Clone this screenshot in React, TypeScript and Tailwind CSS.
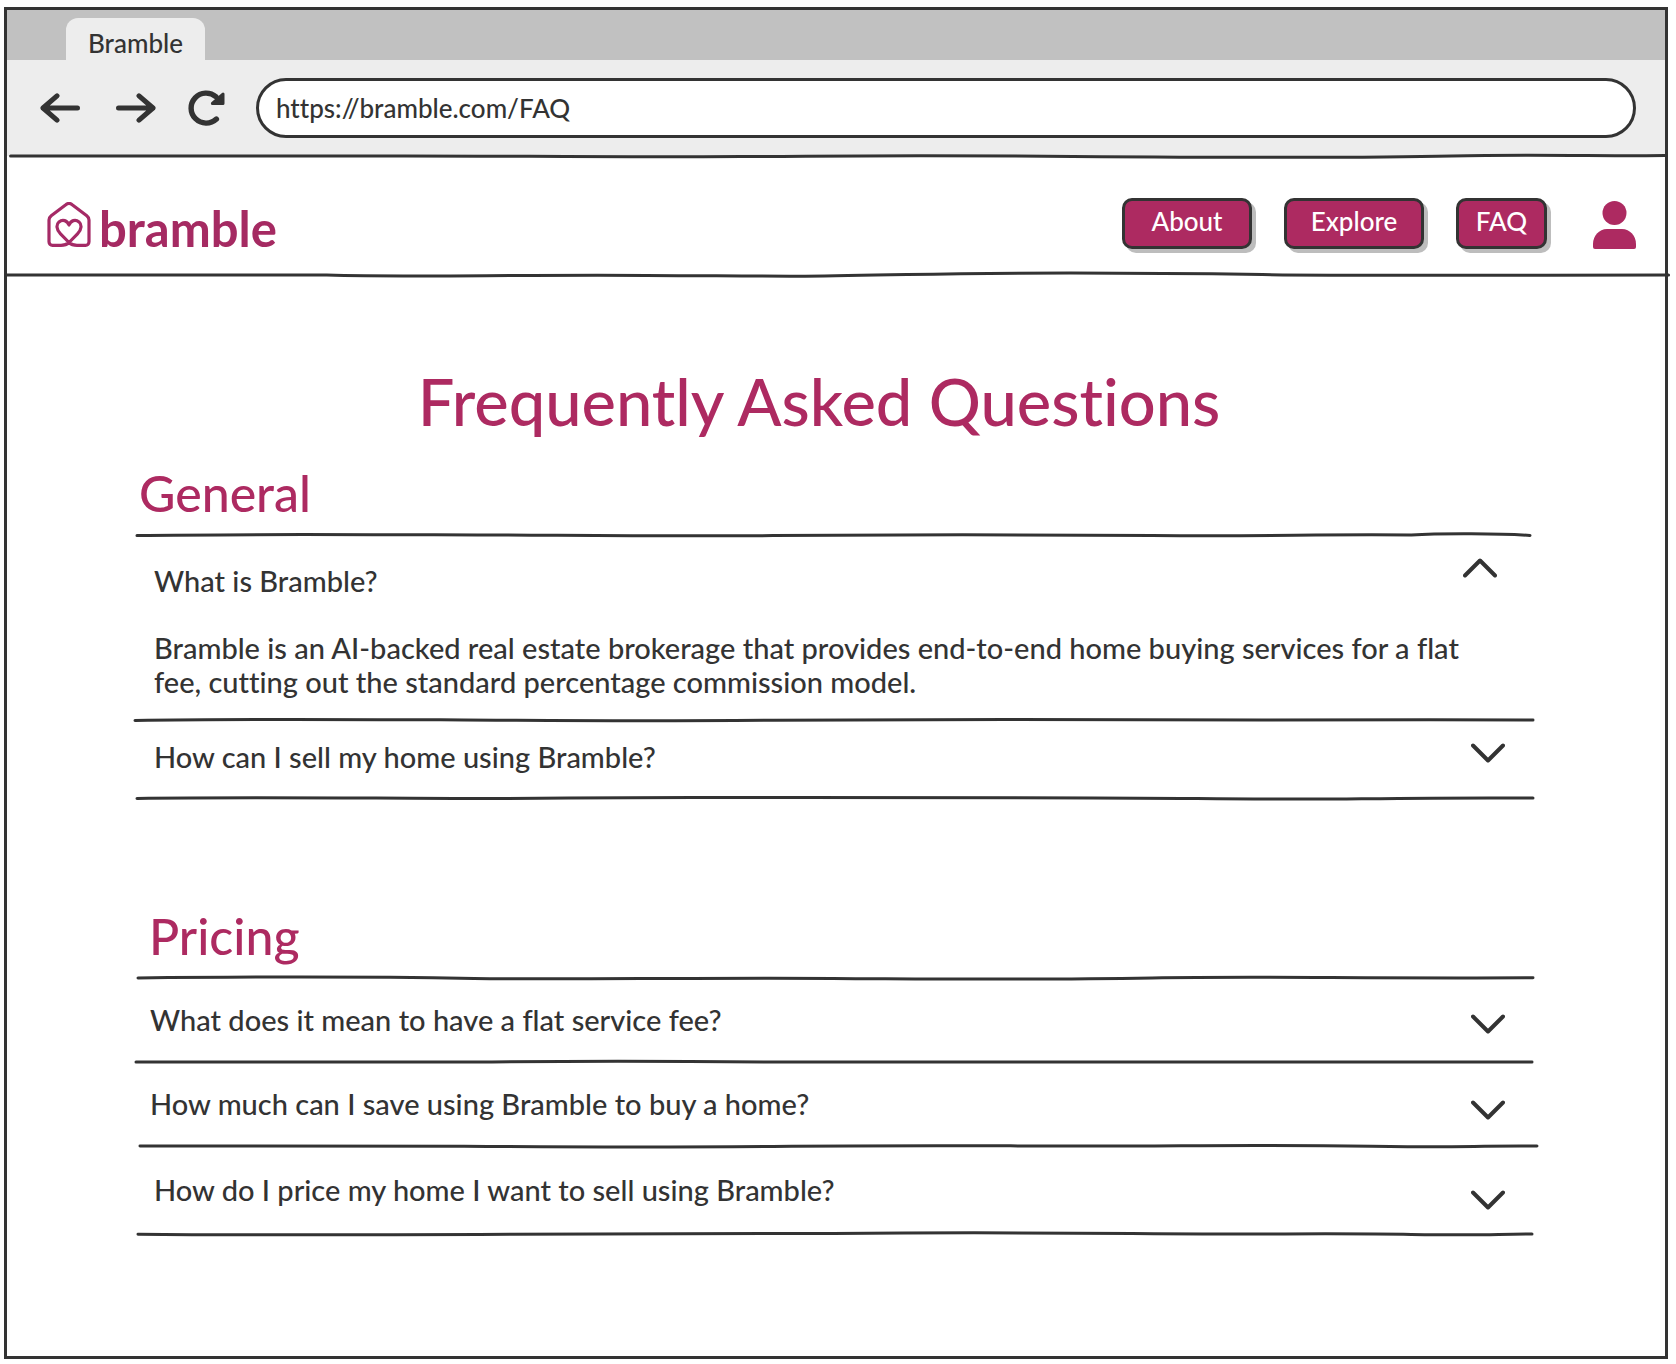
import { useState } from "react";

/* ---------- hand-drawn rules ---------- */

const STROKES = {
  a: "M2 3.6C90 2 180 2.6 300 2.8S520 4.6 640 3.6S900 2.4 1020 3.4S1180 2.2 1280 3C1310 1 1370 1.4 1399 3.4",
  b: "M0 3.4C110 1.6 220 2.4 330 3S500 4.4 640 3.2S1000 2.8 1130 3S1300 2.4 1402 3",
  c: "M2 3.4C100 2 200 3 320 3.4S420 2.4 560 2.4S860 3 960 3S1120 5 1230 3.8S1340 3 1402 3",
  d: "M3 3C120 1.6 260 2 340 3.4S560 2.6 700 3.4S900 5 1020 3S1220 3.8 1402 2.8",
  e: "M1 3H340C460 1.6 520 1.8 640 3S900 3.2 1060 3S1300 3 1401 3",
  f: "M5 3C140 3.6 260 2.6 330 3.2S500 4.6 640 3.4S860 3 960 3S1120 1.4 1240 3.2S1340 2.4 1406 3",
  g: "M3 3.2C120 4.4 260 3.8 380 3.2S600 3.2 700 2.4S880 1.4 1000 2.6S1200 2 1280 3.4S1360 3 1401 3",
  toolbar: "M3 3H300C420 2.4 480 4.6 620 3.6S760 2.2 900 3.4S1150 5 1220 3S1350 3.4 1400 2.6",
  header: "M0 3H270C340 5.4 420 2.6 540 3.4S660 5 760 2.6S980 1.2 1060 2.6S1250 3 1403 3",
};

type StrokeName = keyof typeof STROKES;

function Rule({ stroke, className = "" }: { stroke: StrokeName; className?: string }) {
  return (
    <svg
      viewBox="0 0 1400 6"
      preserveAspectRatio="none"
      aria-hidden="true"
      className={`block h-[6px] w-full overflow-visible ${className}`}
    >
      <path
        d={STROKES[stroke]}
        fill="none"
        stroke="#333333"
        strokeWidth="3"
        strokeLinecap="round"
        vectorEffect="non-scaling-stroke"
      />
    </svg>
  );
}

/* ---------- icons ---------- */

function ArrowIcon({ className = "" }: { className?: string }) {
  return (
    <svg
      viewBox="0 0 40 30"
      aria-hidden="true"
      className={`h-[30px] w-10 ${className}`}
      fill="none"
      stroke="#333333"
      strokeWidth="5"
      strokeLinecap="round"
      strokeLinejoin="round"
    >
      <path d="M3 15H37.5M17 2.8L3 15L17 27.2" />
    </svg>
  );
}

function ReloadIcon() {
  return (
    <svg viewBox="0 0 38 38" aria-hidden="true" className="size-[38px]" fill="none" stroke="#333333">
      <path
        d="M28.4 30A15 15 0 1 1 28 7.8"
        strokeWidth="5.4"
        strokeLinecap="round"
      />
      <path d="M35 5V14.4H24.4Z" fill="#333333" strokeWidth="3" strokeLinejoin="round" />
    </svg>
  );
}

function ChevronIcon({ open, className = "" }: { open: boolean; className?: string }) {
  return (
    <svg
      viewBox="0 0 34 20"
      aria-hidden="true"
      className={`h-5 w-[34px] shrink-0 ${className}`}
      fill="none"
      stroke="#333333"
      strokeWidth="4"
      strokeLinecap="round"
      strokeLinejoin="round"
    >
      <path d={open ? "M2 17.5L17 2.5L32 17.5" : "M2 2.5L17 17.5L32 2.5"} />
    </svg>
  );
}

function UserIcon() {
  return (
    <svg viewBox="0 0 43 48" aria-hidden="true" className="h-12 w-[43px]" fill="#ad2a61">
      <circle cx="21.5" cy="12" r="12" />
      <path d="M14 28H29C37 28 43 35 43 43V46A2 2 0 0 1 41 48H2A2 2 0 0 1 0 46V43C0 35 6 28 14 28Z" />
    </svg>
  );
}

function HouseHeart() {
  return (
    <svg
      viewBox="0 0 44 45"
      aria-hidden="true"
      className="h-[45px] w-11"
      fill="none"
      stroke="#a52a66"
      strokeWidth="3.2"
      strokeLinecap="round"
      strokeLinejoin="round"
    >
      <path d="M22 40.5C24 42.4 26.5 43.3 30 43.3H38.5A3.5 3.5 0 0 0 42 39.8V18C42 16 41.2 14.8 39.8 13.7L25.2 2.8A5 5 0 0 0 18.8 2.8L4.2 13.7C2.8 14.8 2 16 2 18V39.8A3.5 3.5 0 0 0 5.5 43.3H14C17.5 43.3 20 42.4 22 40.5L30.5 31.8C35 27.4 34.8 22.4 32 19.9C28.4 16.9 23.8 18.4 22 23C20.2 18.4 15.6 16.9 12 19.9C9.2 22.4 9 27.4 13.5 31.8Z" />
    </svg>
  );
}

/* ---------- FAQ ---------- */

type Item = {
  question: string;
  answer?: string;
  rule: StrokeName;
  row: string;
  chevron: string;
};

type Group = { title: string; rule: StrokeName; heading: string; items: Item[] };

const GROUPS: Group[] = [
  {
    title: "General",
    rule: "a",
    heading: "pl-1",
    items: [
      {
        question: "What is Bramble?",
        answer:
          "Bramble is an AI-backed real estate brokerage that provides end-to-end home buying services for a flat fee, cutting out the standard percentage commission model.",
        rule: "b",
        row: "pt-5 pb-[27px] pl-[19px]",
        chevron: "mr-2 mb-[26px]",
      },
      {
        question: "How can I sell my home using Bramble?",
        rule: "c",
        row: "h-[72px] pb-1 pl-[19px]",
        chevron: "mb-2",
      },
    ],
  },
  {
    title: "Pricing",
    rule: "d",
    heading: "pl-[14px]",
    items: [
      {
        question: "What does it mean to have a flat service fee?",
        rule: "e",
        row: "h-[78px] pl-[15px]",
        chevron: "mt-2",
      },
      {
        question: "How much can I save using Bramble to buy a home?",
        rule: "f",
        row: "h-[78px] pl-[15px]",
        chevron: "mt-3",
      },
      {
        question: "How do I price my home I want to sell using Bramble?",
        rule: "g",
        row: "h-[82px] pl-[19px]",
        chevron: "mt-5",
      },
    ],
  },
];

function FaqRow({ item }: { item: Item }) {
  const [open, setOpen] = useState(item.answer !== undefined);
  return (
    <>
      <h3>
        <button
          type="button"
          aria-expanded={open}
          onClick={() => setOpen(!open)}
          className={`flex w-full cursor-pointer items-center justify-between gap-4 pr-[26px] text-left ${item.row}`}
        >
          <span>{item.question}</span>
          <ChevronIcon open={open} className={item.chevron} />
        </button>
      </h3>
      {open && item.answer && <p className="pr-12 pb-[18px] pl-[19px]">{item.answer}</p>}
      <Rule stroke={item.rule} />
    </>
  );
}

/* ---------- page ---------- */

const NAV = [
  { label: "About", width: "w-[130px]" },
  { label: "Explore", width: "w-[140px]" },
  { label: "FAQ", width: "w-[91px]" },
];

export default function App() {
  return (
    <div className="flex min-h-screen bg-white pt-[7px] pr-2 pb-[5px] pl-1 font-['Lato',sans-serif] font-medium text-[#333333] [font-variant-ligatures:no-common-ligatures]">
      <div className="flex min-w-0 flex-1 flex-col border-3 border-[#333333]">
        <div className="flex h-[50px] items-end bg-[#c1c1c1] pl-[59px]">
          <div className="flex h-[42px] w-[139px] items-center justify-center rounded-t-xl bg-[#ededed] pt-2 text-[26px] leading-[34px]">
            Bramble
          </div>
        </div>

        <div className="flex items-center bg-[#ededed] pt-[18px] pr-[29px] pb-[18px] pl-[33px]">
          <button type="button" aria-label="Back">
            <ArrowIcon />
          </button>
          <button type="button" aria-label="Forward" className="ml-9">
            <ArrowIcon className="rotate-180" />
          </button>
          <button type="button" aria-label="Reload" className="ml-8">
            <ReloadIcon />
          </button>
          <input
            type="text"
            aria-label="Address"
            defaultValue="https://bramble.com/FAQ"
            className="ml-[30px] h-[60px] min-w-0 flex-1 rounded-full border-3 border-[#333333] bg-white px-[17px] text-[26px] outline-none"
          />
        </div>
        <Rule stroke="toolbar" className="-mt-[3px]" />

        <header className="flex items-start justify-between pt-[38px] pr-[29px] pb-[18px] pl-10">
          <a href="#home" aria-label="bramble" className="flex h-[57px] items-baseline gap-2 pt-[5px]">
            <HouseHeart />
            <span className="text-[49px] leading-[48px] font-bold text-[#a52a62]">bramble</span>
          </a>
          <nav aria-label="Main" className="flex items-center gap-8">
            {NAV.map(({ label, width }) => (
              <a
                key={label}
                href={`#${label.toLowerCase()}`}
                className={`flex h-[51px] items-center justify-center rounded-[10px] border-3 border-[#333333] bg-[#ad2a61] pb-1 text-[26px] leading-[34px] text-white shadow-[4px_4px_0_#bdbdbd] ${width}`}
              >
                {label}
              </a>
            ))}
            <button type="button" aria-label="Account" className="mt-1 ml-[14px]">
              <UserIcon />
            </button>
          </nav>
        </header>
        <Rule stroke="header" />

        <main className="pt-[91px] pr-[134px] pb-10 pl-32 text-[29px] leading-[34px]">
          <h1 className="pr-7 text-center text-[65px] leading-[64px] text-[#ad2a61]">
            Frequently Asked Questions
          </h1>
          <div className="flex flex-col gap-[107px] pt-8">
            {GROUPS.map((group) => (
              <section key={group.title}>
                <h2 className={`pb-[11px] text-[50px] leading-[56px] text-[#ad2a61] ${group.heading}`}>
                  {group.title}
                </h2>
                <Rule stroke={group.rule} />
                {group.items.map((item) => (
                  <FaqRow key={item.question} item={item} />
                ))}
              </section>
            ))}
          </div>
        </main>
      </div>
    </div>
  );
}
